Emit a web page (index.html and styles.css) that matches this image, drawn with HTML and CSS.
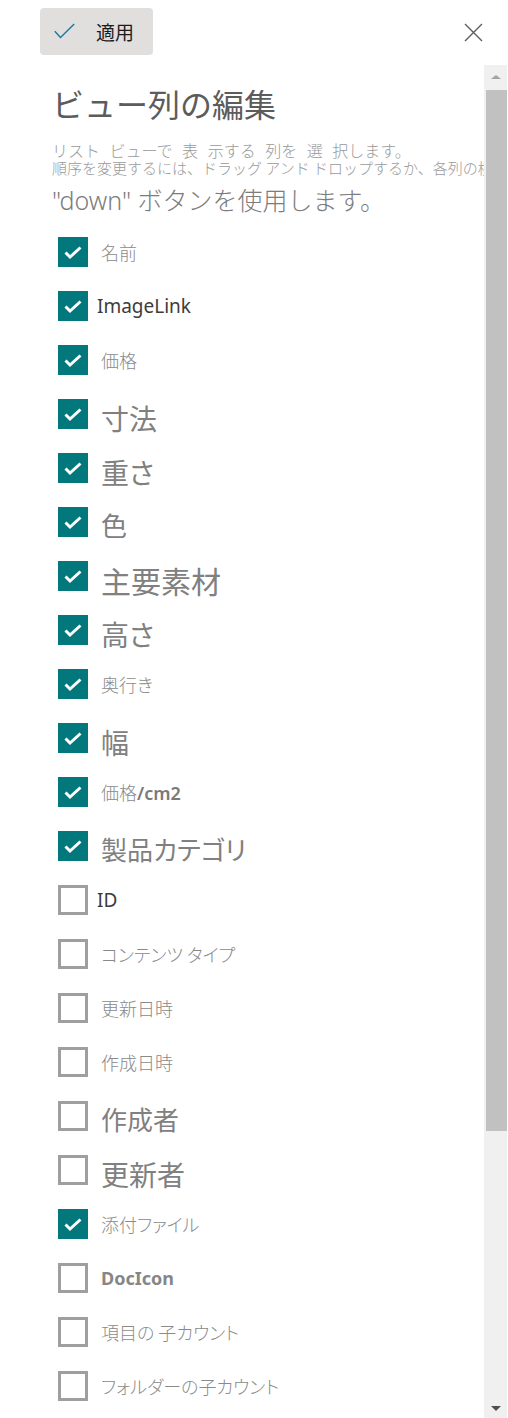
FILE: index.html
```html
<!DOCTYPE html>
<html lang="ja">
<head>
    <meta charset="UTF-8">
    <meta name="viewport" content="width=device-width, initial-scale=1.0">
    <title>ビュー列の編集</title>
    <link rel="stylesheet" href="styles.css">
</head>
<body>
    <!-- 上部のボタン -->
    <div class="top-bar">
        <button class="apply-btn">
            <svg class="apply-icon" width="21" height="16" viewBox="0 0 21 16">
                <polyline points="0.8,8.2 6.5,14.5 20.2,1" fill="none" stroke="#137a9e" stroke-width="1.4"/>
            </svg>
            <span>適用</span>
        </button>
        <svg class="close-icon" width="19" height="19" viewBox="0 0 19 19">
            <path d="M1 1 L18 18 M18 1 L1 18" stroke="#605e5c" stroke-width="1.4"/>
        </svg>
    </div>

    <div class="main">
        <div class="panel">
            <h1 class="title">ビュー列の編集</h1>
            <div class="desc first">リスト ビューで 表 示する 列を 選 択します。</div>
            <div class="desc">順序を変更するには、ドラッグ アンド ドロップするか、各列の横にある "up" または</div>
            <div class="desc-big">"down" ボタンを使用します。</div>

            <!-- 列の一覧 -->
            <ul class="col-list">
                <li class="row"><span class="box on"></span><span class="lbl thin">名前</span></li>
                <li class="row"><span class="box on"></span><span class="lbl en">ImageLink</span></li>
                <li class="row"><span class="box on"></span><span class="lbl thin">価格</span></li>
                <li class="row"><span class="box on"></span><span class="lbl big">寸法</span></li>
                <li class="row"><span class="box on"></span><span class="lbl big">重さ</span></li>
                <li class="row"><span class="box on"></span><span class="lbl mid">色</span></li>
                <li class="row"><span class="box on"></span><span class="lbl huge">主要素材</span></li>
                <li class="row"><span class="box on"></span><span class="lbl big">高さ</span></li>
                <li class="row"><span class="box on"></span><span class="lbl thin">奥行き</span></li>
                <li class="row"><span class="box on"></span><span class="lbl big">幅</span></li>
                <li class="row"><span class="box on"></span><span class="lbl thin">価格<b>/cm2</b></span></li>
                <li class="row"><span class="box on"></span><span class="lbl mid">製品カテゴリ</span></li>
                <li class="row"><span class="box"></span><span class="lbl en">ID</span></li>
                <li class="row"><span class="box"></span><span class="lbl thin">コンテンツ タイプ</span></li>
                <li class="row"><span class="box"></span><span class="lbl thin">更新日時</span></li>
                <li class="row"><span class="box"></span><span class="lbl thin">作成日時</span></li>
                <li class="row"><span class="box"></span><span class="lbl mid">作成者</span></li>
                <li class="row"><span class="box"></span><span class="lbl big">更新者</span></li>
                <li class="row"><span class="box on"></span><span class="lbl thin">添付ファイル</span></li>
                <li class="row"><span class="box"></span><span class="lbl bold">DocIcon</span></li>
                <li class="row"><span class="box"></span><span class="lbl thin">項目の 子カウント</span></li>
                <li class="row"><span class="box"></span><span class="lbl thin">フォルダーの子カウント</span></li>
            </ul>
        </div>

        <!-- スクロールバー -->
        <div class="scrollbar">
            <span class="arrow up"></span>
            <div class="thumb"></div>
            <div class="track-rest"></div>
            <span class="arrow down"></span>
        </div>
    </div>
</body>
</html>
```

FILE: styles.css
```css
*{
    margin: 0;
    padding: 0;
    box-sizing: border-box;
}
body{
    font-family: "Noto Sans", "Noto Sans CJK JP", sans-serif;
    background-color: #fff;
    height: 1418px;
    overflow: hidden;
}

/* 上部 */
.top-bar{
    height: 65px;
    display: flex;
    justify-content: space-between;
    align-items: flex-start;
    padding: 8px 25px 0 40px;
}
.apply-btn{
    width: 113px;
    height: 47px;
    border: none;
    border-radius: 4px;
    background-color: #e1dfdd;
    display: flex;
    align-items: center;
    padding-left: 14px;
    font-family: "Noto Sans CJK JP", sans-serif;
    font-size: 19px;
    color: #1b1b1b;
}
.apply-icon{
    margin-right: 21px;
    margin-top: -1px;
}
.close-icon{
    margin-top: 15px;
}

.main{
    display: flex;
    height: 1353px;
}
.panel{
    flex: 1;
    overflow: hidden;
    padding-left: 52px;
}

.title{
    margin-top: 18px;
    font-family: "Noto Sans CJK JP", sans-serif;
    font-size: 32px;
    line-height: 40px;
    font-weight: 400;
    color: #5c5c5c;
}
.desc{
    font-family: "Noto Sans CJK JP", sans-serif;
    font-size: 15px;
    line-height: 18px;
    font-weight: 300;
    color: #9a9a9a;
    white-space: nowrap;
}
.desc.first{
    margin-top: 18px;
    font-size: 16px;
    word-spacing: 6px;
}
.desc-big{
    margin-top: 9px;
    font-family: "Noto Sans", "Noto Sans CJK JP", sans-serif;
    font-size: 25px;
    line-height: 28px;
    font-weight: 300;
    color: #7c7c7c;
    white-space: nowrap;
}

/* 列の一覧 */
.col-list{
    list-style: none;
    margin-top: 23px;
    padding-left: 6px;
    display: flex;
    flex-direction: column;
    gap: 24px;
}
.row{
    height: 30px;
    display: flex;
    align-items: center;
    gap: 13px;
}
.box{
    flex: none;
    width: 30px;
    height: 30px;
    border: 3px solid #a19f9d;
}
.box.on{
    border: none;
    background-color: #03787c;
    background-image: url("data:image/svg+xml,%3Csvg xmlns='http://www.w3.org/2000/svg' width='30' height='30'%3E%3Cpolyline points='7.5,15.5 12,20 22.5,10.5' fill='none' stroke='white' stroke-width='3'/%3E%3C/svg%3E");
}
.lbl{
    line-height: 30px;
    white-space: nowrap;
    color: #808080;
    font-family: "Noto Sans CJK JP", sans-serif;
    font-feature-settings: "palt";
}
.lbl.thin{
    font-size: 18px;
    font-weight: 300;
    color: #8a8a8a;
}
.lbl.thin b{
    font-family: "Noto Sans", sans-serif;
    font-weight: 600;
    color: #7a7a7a;
}
.lbl.en{
    font-family: "Noto Sans", sans-serif;
    font-size: 19px;
    color: #3c3c3c;
    margin-left: -4px;
}
.lbl.bold{
    font-family: "Noto Sans", sans-serif;
    font-size: 18px;
    font-weight: 700;
    color: #868686;
}
.lbl.mid{
    font-size: 26px;
    margin-top: 6px;
}
.lbl.big{
    font-size: 28px;
    margin-top: 8px;
}
.lbl.huge{
    font-size: 30px;
    margin-top: 8px;
}

/* スクロールバー */
.scrollbar{
    flex: none;
    width: 23px;
    margin-right: 1px;
    background-color: #f0f0f0;
    display: flex;
    flex-direction: column;
    align-items: flex-end;
}
.arrow{
    align-self: center;
    width: 0;
    height: 0;
    border-left: 5px solid transparent;
    border-right: 5px solid transparent;
}
.arrow.up{
    margin: 10px 0 11px;
    border-bottom: 4px solid #a3a3a3;
}
.arrow.down{
    margin: 0 0 7px;
    border-top: 5px solid #505050;
}
.thumb{
    width: 21px;
    height: 1041px;
    background-color: #c1c1c1;
}
.track-rest{
    flex: 1;
}
```
